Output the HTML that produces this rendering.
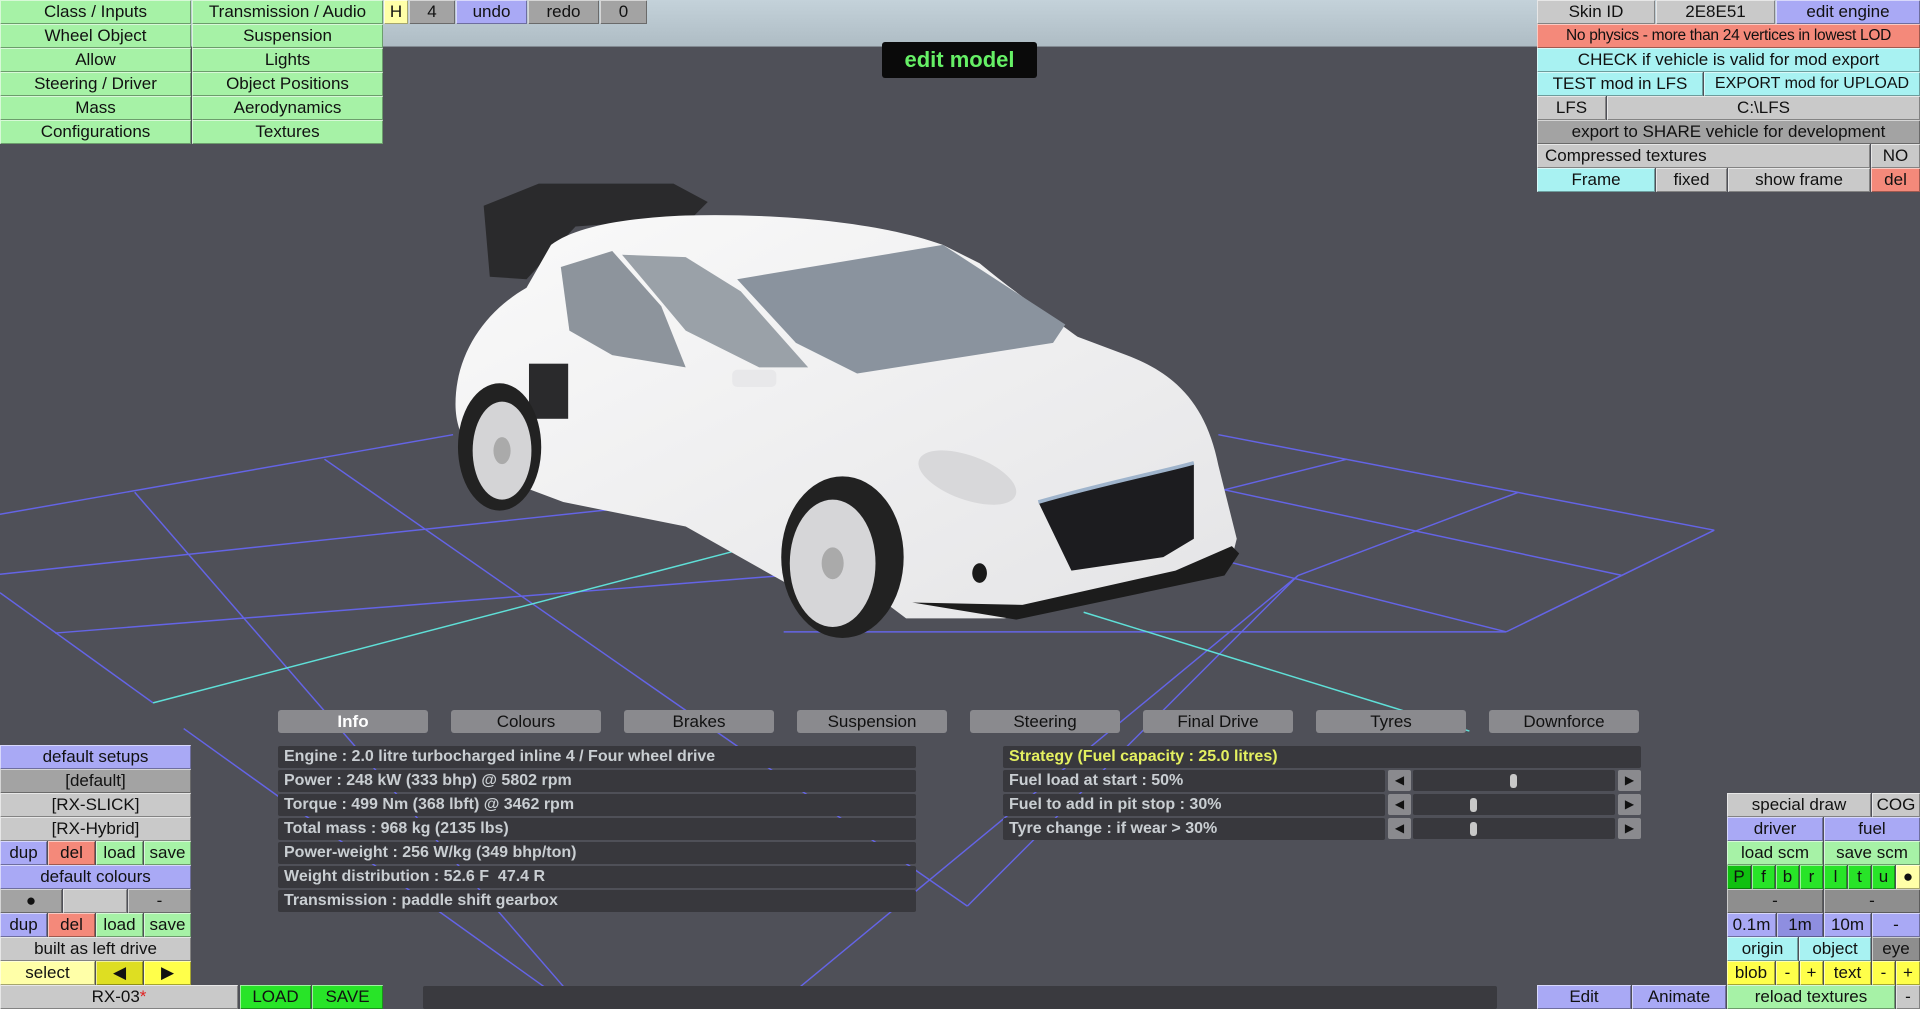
<!DOCTYPE html>
<html><head><meta charset="utf-8"><style>
*{margin:0;padding:0;box-sizing:border-box}
body{width:1920px;height:1009px;overflow:hidden;background:#4f5058;position:relative;font-family:"Liberation Sans",sans-serif}
.b{position:absolute;height:24px;line-height:24px;text-align:center;font-size:17px;color:#111;white-space:nowrap;overflow:hidden;box-shadow:inset 1px 1px 0 rgba(255,255,255,.55),inset -1px -1px 0 rgba(0,0,0,.35)}
.g{background:#a6f2a6}.bl{background:#a9a9f5}.gr{background:#c9c9c9}.dg{background:#a3a3a3}.md{background:#8e8e8e}
.r{background:#f4897a}.c{background:#a8f2f2}.y{background:#ffff4a}.ly{background:#ffffa8}.dy{background:#dede22}
.bg{background:#28e428}.dgn{background:#10c010}.db{background:#8e8ee0}
.tab{position:absolute;top:710px;width:150px;height:23px;line-height:23px;background:#8a8a8e;border-radius:3px;text-align:center;font-size:17px;color:#111}
.row{position:absolute;height:22px;line-height:22px;background:#38383d;border-radius:2px;color:#c9ced2;font-size:16px;font-weight:bold;padding-left:6px;white-space:nowrap}
.sb{position:absolute;width:23px;height:21px;background:#8a8a8e;border-radius:2px;font-size:12px;line-height:21px;text-align:center;color:#111}
.tr{position:absolute;height:21px;background:#38383d;border-radius:2px}
.kn{position:absolute;width:7px;height:14px;top:4px;background:#c8c8c8;border-radius:3px}
</style></head><body>
<svg style="position:absolute;left:0;top:0" width="1920" height="1009" viewBox="0 0 1568 824" preserveAspectRatio="none">
<defs><linearGradient id="sky" x1="0" y1="0" x2="0" y2="1"><stop offset="0" stop-color="#c4d2da"/><stop offset="1" stop-color="#aebcc4"/></linearGradient>
<linearGradient id="bd" x1="0" y1="0" x2="1" y2="1"><stop offset="0" stop-color="#fafafa"/><stop offset="1" stop-color="#e4e4e6"/></linearGradient></defs>
<rect x="0" y="0" width="1568" height="38" fill="url(#sky)"/>
<g stroke="#6464e6" stroke-width="1.2" fill="none">
<line x1="0" y1="420" x2="370" y2="355"/><line x1="0" y1="469" x2="500" y2="416"/>
<line x1="45" y1="517" x2="640" y2="470"/><line x1="0" y1="484" x2="125" y2="574"/>
<line x1="150" y1="595" x2="460" y2="817"/><line x1="110" y1="402" x2="470" y2="817"/>
<line x1="265" y1="375" x2="790" y2="740"/><line x1="1060" y1="470" x2="640" y2="817"/>
<line x1="995" y1="355" x2="1400" y2="433"/><line x1="1000" y1="400" x2="1325" y2="470"/>
<line x1="1000" y1="458" x2="1230" y2="516"/><line x1="1400" y1="433" x2="1230" y2="516"/>
<line x1="1240" y1="402" x2="1060" y2="470"/><line x1="1100" y1="375" x2="1000" y2="400"/>
<line x1="640" y1="516" x2="1230" y2="516"/><line x1="790" y1="740" x2="1060" y2="470"/>
</g>
<g stroke="#5fe0d8" stroke-width="1.2"><line x1="125" y1="574" x2="600" y2="450"/><line x1="885" y1="500" x2="1200" y2="597"/></g>
<path d="M395,168 L440,150 L550,150 L578,165 L565,178 L470,185 L430,228 L400,226 Z" fill="#2a2a2c"/>
<path d="M372,330 C372,290 395,255 430,235 L450,200 C470,185 510,178 560,176 C640,174 720,182 770,200 L800,215 C830,240 860,260 880,275 L920,290 C960,305 985,330 995,380 L1010,440 L1005,460 L960,475 C900,490 850,500 820,505 L740,505 L720,490 L640,475 L560,430 L460,410 L420,395 C390,380 372,360 372,330 Z" fill="url(#bd)"/>
<path d="M745,492 L830,506 L1000,470 L1012,452 L1006,446 L960,466 L835,494 Z" fill="#1c1c1c"/>
<path d="M458,218 L500,205 L540,250 L560,300 L500,290 L465,270 Z" fill="#8d949c"/>
<path d="M508,208 L560,210 L605,238 L660,300 L620,300 L560,270 Z" fill="#9aa1a8"/>
<path d="M602,228 L770,200 L870,265 L860,280 L700,305 L650,280 Z" fill="#8a939e"/>
<path d="M848,410 C900,395 950,385 975,378 L975,440 L950,455 L875,466 Z" fill="#1c1c1f"/>
<path d="M848,410 C900,395 950,385 975,378" stroke="#9fb4cc" stroke-width="3" fill="none"/>
<ellipse cx="790" cy="390" rx="42" ry="18" fill="#d8d8da" transform="rotate(20 790 390)"/>
<ellipse cx="800" cy="468" rx="6" ry="8" fill="#1a1a1a"/>
<rect x="432" y="297" width="32" height="45" fill="#2a2a2c"/>
<ellipse cx="408" cy="365" rx="34" ry="52" fill="#222"/><ellipse cx="410" cy="368" rx="24" ry="40" fill="#d4d4d6"/><ellipse cx="410" cy="368" rx="7" ry="11" fill="#aaa"/>
<ellipse cx="688" cy="455" rx="50" ry="66" fill="#222"/><ellipse cx="680" cy="460" rx="35" ry="52" fill="#d6d6d8"/><ellipse cx="680" cy="460" rx="9" ry="13" fill="#aaa"/>
<rect x="598" y="302" width="36" height="14" rx="4" fill="#e8e8ea"/>
</svg>

<div class="b g" style="left:0;top:0;width:191px">Class / Inputs</div><div class="b g" style="left:192px;top:0;width:191px">Transmission / Audio</div>
<div class="b g" style="left:0;top:24px;width:191px">Wheel Object</div><div class="b g" style="left:192px;top:24px;width:191px">Suspension</div>
<div class="b g" style="left:0;top:48px;width:191px">Allow</div><div class="b g" style="left:192px;top:48px;width:191px">Lights</div>
<div class="b g" style="left:0;top:72px;width:191px">Steering / Driver</div><div class="b g" style="left:192px;top:72px;width:191px">Object Positions</div>
<div class="b g" style="left:0;top:96px;width:191px">Mass</div><div class="b g" style="left:192px;top:96px;width:191px">Aerodynamics</div>
<div class="b g" style="left:0;top:120px;width:191px">Configurations</div><div class="b g" style="left:192px;top:120px;width:191px">Textures</div>
<div class="b ly" style="left:384px;top:0;width:24px">H</div>
<div class="b dg" style="left:409px;top:0;width:46px">4</div>
<div class="b bl" style="left:456px;top:0;width:71px">undo</div>
<div class="b dg" style="left:528px;top:0;width:71px">redo</div>
<div class="b dg" style="left:600px;top:0;width:47px">0</div>

<div style="position:absolute;left:882px;top:42px;width:155px;height:36px;background:#0a0a0a;border-radius:3px;color:#66f066;font-weight:bold;font-size:22px;line-height:36px;text-align:center">edit model</div>

<div class="b gr" style="left:1537px;top:0;width:118px">Skin ID</div><div class="b gr" style="left:1656px;top:0;width:119px">2E8E51</div><div class="b bl" style="left:1776px;top:0;width:144px">edit engine</div>
<div class="b r" style="left:1537px;top:24px;width:383px;font-size:15.5px;letter-spacing:-0.3px">No physics - more than 24 vertices in lowest LOD</div>
<div class="b c" style="left:1537px;top:48px;width:383px">CHECK if vehicle is valid for mod export</div>
<div class="b c" style="left:1537px;top:72px;width:166px">TEST mod in LFS</div><div class="b c" style="left:1704px;top:72px;width:216px;font-size:16px">EXPORT mod for UPLOAD</div>
<div class="b gr" style="left:1537px;top:96px;width:69px">LFS</div><div class="b gr" style="left:1607px;top:96px;width:313px">C:\LFS</div>
<div class="b dg" style="left:1537px;top:120px;width:383px">export to SHARE vehicle for development</div>
<div class="b gr" style="left:1537px;top:144px;width:333px;text-align:left;padding-left:8px">Compressed textures</div><div class="b gr" style="left:1871px;top:144px;width:49px">NO</div>
<div class="b c" style="left:1537px;top:168px;width:118px">Frame</div><div class="b gr" style="left:1656px;top:168px;width:71px">fixed</div><div class="b gr" style="left:1728px;top:168px;width:142px">show frame</div><div class="b r" style="left:1871px;top:168px;width:49px">del</div>

<div class="tab" style="left:278px;color:#fff;font-weight:bold">Info</div>
<div class="tab" style="left:451px">Colours</div><div class="tab" style="left:624px">Brakes</div><div class="tab" style="left:797px">Suspension</div>
<div class="tab" style="left:970px">Steering</div><div class="tab" style="left:1143px">Final Drive</div><div class="tab" style="left:1316px">Tyres</div><div class="tab" style="left:1489px">Downforce</div>

<div class="row" style="left:278px;top:746px;width:638px">Engine : 2.0 litre turbocharged inline 4 / Four wheel drive</div>
<div class="row" style="left:278px;top:770px;width:638px">Power : 248 kW (333 bhp) @ 5802 rpm</div>
<div class="row" style="left:278px;top:794px;width:638px">Torque : 499 Nm (368 lbft) @ 3462 rpm</div>
<div class="row" style="left:278px;top:818px;width:638px">Total mass : 968 kg (2135 lbs)</div>
<div class="row" style="left:278px;top:842px;width:638px">Power-weight : 256 W/kg (349 bhp/ton)</div>
<div class="row" style="left:278px;top:866px;width:638px">Weight distribution : 52.6 F &nbsp;47.4 R</div>
<div class="row" style="left:278px;top:890px;width:638px">Transmission : paddle shift gearbox</div>

<div class="row" style="left:1003px;top:746px;width:638px;color:#e4f060">Strategy (Fuel capacity : 25.0 litres)</div>
<div class="row" style="left:1003px;top:770px;width:382px">Fuel load at start : 50%</div>
<div class="row" style="left:1003px;top:794px;width:382px">Fuel to add in pit stop : 30%</div>
<div class="row" style="left:1003px;top:818px;width:382px">Tyre change : if wear &gt; 30%</div>
<div class="sb" style="left:1388px;top:770px">◀</div><div class="tr" style="left:1413px;top:770px;width:202px"><div class="kn" style="left:97px"></div></div><div class="sb" style="left:1618px;top:770px">▶</div>
<div class="sb" style="left:1388px;top:794px">◀</div><div class="tr" style="left:1413px;top:794px;width:202px"><div class="kn" style="left:57px"></div></div><div class="sb" style="left:1618px;top:794px">▶</div>
<div class="sb" style="left:1388px;top:818px">◀</div><div class="tr" style="left:1413px;top:818px;width:202px"><div class="kn" style="left:57px"></div></div><div class="sb" style="left:1618px;top:818px">▶</div>

<div class="b bl" style="left:0;top:745px;width:191px">default setups</div>
<div class="b dg" style="left:0;top:769px;width:191px">[default]</div>
<div class="b gr" style="left:0;top:793px;width:191px">[RX-SLICK]</div>
<div class="b gr" style="left:0;top:817px;width:191px">[RX-Hybrid]</div>
<div class="b bl" style="left:0;top:841px;width:47px">dup</div><div class="b r" style="left:48px;top:841px;width:47px">del</div><div class="b g" style="left:96px;top:841px;width:47px">load</div><div class="b g" style="left:144px;top:841px;width:47px">save</div>
<div class="b bl" style="left:0;top:865px;width:191px">default colours</div>
<div class="b dg" style="left:0;top:889px;width:62px">●</div><div class="b gr" style="left:63px;top:889px;width:64px"></div><div class="b dg" style="left:128px;top:889px;width:63px">-</div>
<div class="b bl" style="left:0;top:913px;width:47px">dup</div><div class="b r" style="left:48px;top:913px;width:47px">del</div><div class="b g" style="left:96px;top:913px;width:47px">load</div><div class="b g" style="left:144px;top:913px;width:47px">save</div>
<div class="b gr" style="left:0;top:937px;width:191px">built as left drive</div>
<div class="b ly" style="left:0;top:961px;width:95px">select</div><div class="b dy" style="left:96px;top:961px;width:47px">◀</div><div class="b y" style="left:144px;top:961px;width:47px">▶</div>
<div class="b gr" style="left:0;top:985px;width:238px">RX-03<span style="color:#e02020">*</span></div>
<div class="b bg" style="left:240px;top:985px;width:71px">LOAD</div><div class="b bg" style="left:312px;top:985px;width:71px">SAVE</div>
<div style="position:absolute;left:423px;top:986px;width:1074px;height:23px;background:#3a3a3f;border-radius:2px"></div>

<div class="b gr" style="left:1727px;top:793px;width:144px">special draw</div><div class="b gr" style="left:1872px;top:793px;width:48px">COG</div>
<div class="b bl" style="left:1727px;top:817px;width:96px">driver</div><div class="b bl" style="left:1824px;top:817px;width:96px">fuel</div>
<div class="b g" style="left:1727px;top:841px;width:96px">load scm</div><div class="b g" style="left:1824px;top:841px;width:96px">save scm</div>
<div class="b dgn" style="left:1727px;top:865px;width:24px">P</div><div class="b bg" style="left:1752px;top:865px;width:23px">f</div><div class="b bg" style="left:1776px;top:865px;width:23px">b</div><div class="b bg" style="left:1800px;top:865px;width:23px">r</div><div class="b bg" style="left:1824px;top:865px;width:23px">l</div><div class="b bg" style="left:1848px;top:865px;width:23px">t</div><div class="b bg" style="left:1872px;top:865px;width:23px">u</div><div class="b ly" style="left:1896px;top:865px;width:24px">●</div>
<div class="b md" style="left:1727px;top:889px;width:96px">-</div><div class="b md" style="left:1824px;top:889px;width:96px">-</div>
<div class="b bl" style="left:1727px;top:913px;width:49px">0.1m</div><div class="b db" style="left:1777px;top:913px;width:46px">1m</div><div class="b bl" style="left:1824px;top:913px;width:47px">10m</div><div class="b bl" style="left:1872px;top:913px;width:48px">-</div>
<div class="b c" style="left:1727px;top:937px;width:71px">origin</div><div class="b c" style="left:1799px;top:937px;width:72px">object</div><div class="b md" style="left:1872px;top:937px;width:48px">eye</div>
<div class="b y" style="left:1727px;top:961px;width:48px">blob</div><div class="b y" style="left:1776px;top:961px;width:23px">-</div><div class="b y" style="left:1800px;top:961px;width:23px">+</div><div class="b y" style="left:1824px;top:961px;width:47px">text</div><div class="b y" style="left:1872px;top:961px;width:23px">-</div><div class="b y" style="left:1896px;top:961px;width:24px">+</div>
<div class="b bl" style="left:1537px;top:985px;width:94px">Edit</div><div class="b bl" style="left:1632px;top:985px;width:94px">Animate</div><div class="b g" style="left:1727px;top:985px;width:168px">reload textures</div><div class="b gr" style="left:1896px;top:985px;width:24px">-</div>
</body></html>
